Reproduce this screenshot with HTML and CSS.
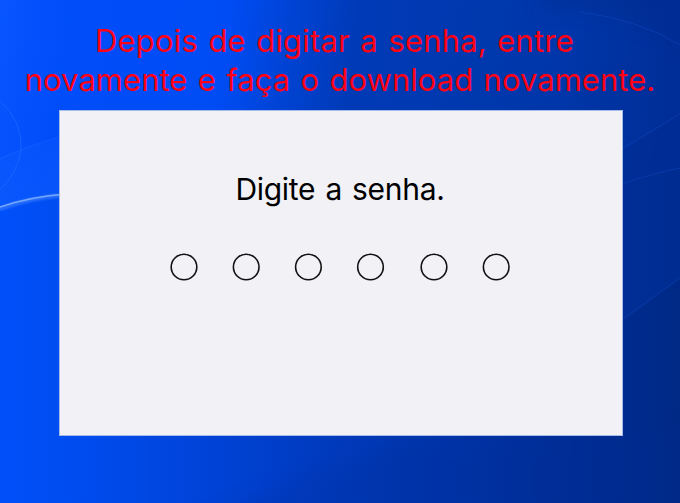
FILE: index.html
```
<!DOCTYPE html>
<html lang="pt-BR">
<head>
<meta charset="utf-8">
<title>Digite a senha</title>
<link rel="stylesheet" href="styles.css">
</head>
<body>
<svg class="wallpaper" viewBox="0 0 680 503" preserveAspectRatio="none" aria-hidden="true">
  <defs>
    <linearGradient id="base" x1="0" y1="0" x2="680" y2="0" gradientUnits="userSpaceOnUse">
      <stop offset="0" stop-color="#0050fa"/>
      <stop offset=".14" stop-color="#004bec"/>
      <stop offset=".3" stop-color="#0043d8"/>
      <stop offset=".5" stop-color="#003abb"/>
      <stop offset=".75" stop-color="#0031a0"/>
      <stop offset="1" stop-color="#002986"/>
    </linearGradient>
    <linearGradient id="top" x1="0" y1="0" x2="670" y2="90" gradientUnits="userSpaceOnUse">
      <stop offset="0" stop-color="#0856ff"/>
      <stop offset=".1" stop-color="#004dfa"/>
      <stop offset=".34" stop-color="#004cf4"/>
      <stop offset=".43" stop-color="#0043d4"/>
      <stop offset=".53" stop-color="#003ab6"/>
      <stop offset=".85" stop-color="#0036a8"/>
      <stop offset="1" stop-color="#002e98"/>
    </linearGradient>
    <linearGradient id="flare" x1="0" y1="120" x2="59" y2="195" gradientUnits="userSpaceOnUse">
      <stop offset="0" stop-color="#1264ff" stop-opacity=".1"/>
      <stop offset="1" stop-color="#1a68ff" stop-opacity=".3"/>
    </linearGradient>
    <filter id="soft"><feGaussianBlur stdDeviation="1"/></filter>
    <filter id="wide" x="-20%" y="-50%" width="140%" height="200%"><feGaussianBlur stdDeviation="9"/></filter>
  </defs>
  <rect width="680" height="503" fill="url(#base)"/>
  <path d="M0 0H680V168Q640 178 600 190H59Q30 195 0 208Z" fill="url(#top)"/>
  <path d="M0 158Q28 145 75 134V194Q30 197 0 207Z" fill="url(#flare)"/>
  <path d="M540 8Q630 10 680 45V-30H540Z" fill="#002a88" opacity=".35" filter="url(#wide)"/>
  <path d="M622 150L680 114V168L622 184Z" fill="#002a90" opacity=".35"/>
  <path d="M622 184L680 168V278L622 320Z" fill="#0033a3" opacity=".35"/>
  <path d="M200 520Q290 480 400 440L700 430V520Z" fill="#002c92" opacity=".2" filter="url(#wide)"/>
  <g fill="none" stroke-linecap="round">
    <path d="M0 101Q23 121 21 151Q17 174 0 190" stroke="#347aff" opacity=".4"/>
    <path d="M0 159Q27 146 62 136" stroke="#347aff" opacity=".25"/>
    <path d="M0 209Q29 198 65 195" stroke="#3f81ff" stroke-width="4" opacity=".65" filter="url(#soft)"/>
    <path d="M0 207Q29 197 65 194" stroke="#76a7ff" stroke-width="1.4"/>
    <path d="M580 12Q640 20 680 45M622 149L680 114M622 184Q648 175 680 168M622 320L680 278" stroke="#124bc5" opacity=".45"/>
  </g>
</svg>
<main class="screen">
  <h1 class="notice">
    <span class="notice-first">Depois de digitar a senha, entre</span>
    <span class="notice-second">novamente e faça o download novamente.</span>
  </h1>
  <section class="panel">
    <h2 class="prompt">Digite a senha.</h2>
    <svg class="digits" viewBox="0 0 340 28" aria-hidden="true">
      <g fill="none" stroke="#111" stroke-width="1.6">
        <circle cx="14" cy="14" r="12.8"/>
        <circle cx="76.2" cy="14" r="12.8"/>
        <circle cx="138.4" cy="14" r="12.8"/>
        <circle cx="200.5" cy="14" r="12.8"/>
        <circle cx="264" cy="14" r="12.8"/>
        <circle cx="326.2" cy="14" r="12.8"/>
      </g>
    </svg>
  </section>
</main>
</body>
</html>
```
FILE: styles.css
```
* { box-sizing: border-box; }
body {
  margin: 0;
  height: 503px;
  overflow: hidden;
  background: #0043d8;
  font-family: Inter, "Liberation Sans", sans-serif;
}
.wallpaper {
  position: absolute;
  inset: 0;
  width: 680px;
  height: 503px;
  z-index: -1;
}
.screen {
  display: flex;
  flex-direction: column;
  width: 680px;
  height: 503px;
  padding: 21px 57px 0 59px;
}
.notice {
  display: flex;
  flex-direction: column;
  align-items: center;
  height: 89px;
  margin: 0 -45px;
  font-size: 31px;
  font-weight: 400;
  line-height: 39px;
  white-space: nowrap;
  color: #ff0014;
}
.notice-first {
  margin-right: 13px;
  letter-spacing: 0.17px;
  word-spacing: 1.6px;
}
.notice-second {
  margin-right: 2px;
  letter-spacing: 0.03px;
  word-spacing: 1.6px;
}
.panel {
  display: flex;
  flex-direction: column;
  align-items: center;
  width: 564px;
  height: 326px;
  padding-top: 59px;
  background: #f1f1f6;
  border: 1px solid #a7bbe9;
}
.prompt {
  margin: 0 2px 0 0;
  font-size: 30px;
  font-weight: 400;
  line-height: 39px;
  letter-spacing: -0.3px;
  word-spacing: 2px;
  color: #000;
}
.digits {
  display: block;
  width: 340px;
  height: 28px;
  margin: 44px 2px 0 0;
}
```
